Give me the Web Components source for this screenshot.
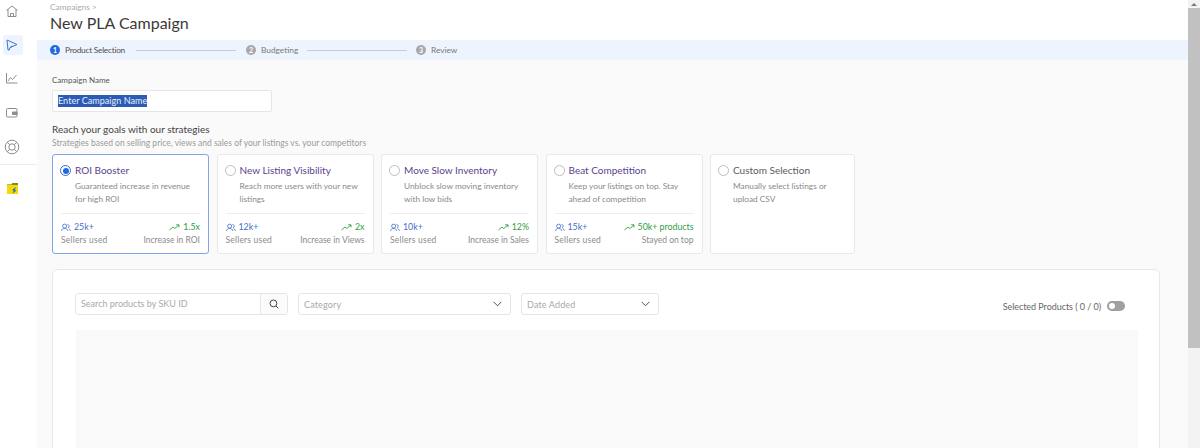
<!DOCTYPE html>
<html>
<head>
<meta charset="utf-8">
<title>New PLA Campaign</title>
<style>
  html, body { margin: 0; height: 448px; overflow: hidden; }
  body { font-family: "Lato", "Open Sans", sans-serif; color: #3d3d3d; background: #fafafa; }
  #app { display: flex; height: 448px; overflow: hidden; }
  #main { flex: 1; min-width: 0; display: flex; flex-direction: column; }
</style>
</head>
<body>
<div id="app">
  <side-nav></side-nav>
  <div id="main">
    <page-head crumb="Campaigns" title="New PLA Campaign"></page-head>
    <step-bar></step-bar>
    <campaign-form></campaign-form>
    <strategy-list>
      <strategy-card selected title="ROI Booster" text="Guaranteed increase in revenue for high ROI" users="25k+" gain="1.5x" gainlabel="Increase in ROI"></strategy-card>
      <strategy-card title="New Listing Visibility" text="Reach more users with your new listings" users="12k+" gain="2x" gainlabel="Increase in Views"></strategy-card>
      <strategy-card title="Move Slow Inventory" text="Unblock slow moving inventory with low bids" users="10k+" gain="12%" gainlabel="Increase in Sales"></strategy-card>
      <strategy-card title="Beat Competition" text="Keep your listings on top. Stay ahead of competition" users="15k+" gain="50k+ products" gainlabel="Stayed on top"></strategy-card>
      <strategy-card custom title="Custom Selection" text="Manually select listings or upload CSV"></strategy-card>
    </strategy-list>
    <product-panel></product-panel>
  </div>
  <page-scroll></page-scroll>
</div>

<script>
class SideNav extends HTMLElement {
    connectedCallback() {
        this.attachShadow({ mode: "open" });
        this.shadowRoot.innerHTML = `
        <style>
            :host { display: flex; flex-direction: column; align-items: center; width: 37px; flex: none; background: #fff; box-sizing: border-box; }
            .item { width: 20px; height: 20px; display: flex; align-items: center; justify-content: center; border-radius: 3px; margin-right: 11px; }
            .item.on { background: #eef4fd; }
            svg { display: block; fill: none; stroke: #8d8d8d; stroke-width: 1; margin-right: 2px; }
            .sep { width: 37px; height: 1px; background: #ececec; }
        </style>
        <div class="item" style="height:22px"><svg width="14" height="14" viewBox="0 0 14 14"><path d="M1.500 6.500 7 2l5.500 4.500M3 5.500V12.500h8V5.500M5.500 12.500V9.500h3v3"/></svg></div>
        <div class="item on" style="margin-top:13px"><svg width="14" height="14" viewBox="0 0 14 14" style="stroke:#3f74d6"><path d="M2 2l10 4.500-7 3-.8 2.500H3zM5 9.500 8 8"/></svg></div>
        <div class="item" style="margin-top:13px"><svg width="14" height="14" viewBox="0 0 14 14"><path d="M1.500 2v10h11M3 10l2.500-3.500 2 2L11.500 4"/></svg></div>
        <div class="item" style="margin-top:15px"><svg width="14" height="12" viewBox="0 0 14 12"><rect x="1.500" y="1.500" width="10.500" height="8.500" rx="1"/><path d="M7.500 5h4.500v2.500H7.500z" fill="#8d8d8d"/></svg></div>
        <div class="item" style="margin-top:14px;margin-bottom:7px"><svg width="16" height="16" viewBox="0 0 16 16"><circle cx="8" cy="8" r="6.800"/><circle cx="8" cy="8" r="3.200"/><path d="M3.200 3.200l2.500 2.500M12.800 3.200l-2.500 2.500M3.200 12.800l2.500-2.500M12.800 12.800l-2.500-2.500"/></svg></div>
        <div class="sep"></div>
        <div class="item" style="margin-top:13px"><svg width="11" height="11" viewBox="0 0 11 11" style="stroke:none"><path d="M0 1.500h4.500L5.500 0H11v11H0z" fill="#f5d90a"/><path d="M0 1.500h4.500L5.500 0H11v2H0z" fill="#6f8f2a"/><path d="M9 4 5 7l1.700.5L5.500 10.500 9.500 7.500 7.800 7z" fill="#2f6fb5"/></svg></div>`;
    }
}
customElements.define("side-nav", SideNav);

class PageHead extends HTMLElement {
    connectedCallback() {
        this.attachShadow({ mode: "open" });
        this.shadowRoot.innerHTML = `
        <style>
            :host { display: block; height: 40px; flex: none; background: #fff; box-sizing: border-box; padding: 2px 0 0 13px; }
            .crumb { font-size: 8.300px; line-height: 11px; color: #ababab; }
            h1 { margin: 0; font-size: 16px; line-height: 20px; font-weight: 400; color: #3a3a3a; }
        </style>
        <div class="crumb">${this.getAttribute("crumb")} &gt;</div>
        <h1>${this.getAttribute("title")}</h1>`;
    }
}
customElements.define("page-head", PageHead);

class StepBar extends HTMLElement {
    connectedCallback() {
        this.attachShadow({ mode: "open" });
        this.shadowRoot.innerHTML = `
        <style>
            :host { display: flex; align-items: center; height: 20px; flex: none; background: #eef4fd; padding-left: 13px; font-size: 8.300px; color: #7a7a7a; white-space: nowrap; }
            .num { width: 10px; height: 10px; border-radius: 50%; background: #a8a8ac; color: #fff; font-size: 7px; line-height: 10px; text-align: center; margin-right: 5px; font-weight: 700; }
            .num.on { background: #2368e0; }
            .on + span { color: #4f4f4f; letter-spacing: -.25px; }
            .line { height: 1px; background: #c6cdd8; width: 100px; margin: 0 10px; }
        </style>
        <div class="num on">1</div><span style="width:60px">Product Selection</span><div class="line" style="margin-left:11px"></div>
        <div class="num">2</div><span style="width:36px">Budgeting</span><div class="line"></div>
        <div class="num" style="margin-left:-1px">3</div><span>Review</span>`;
    }
}
customElements.define("step-bar", StepBar);

class CampaignForm extends HTMLElement {
    connectedCallback() {
        this.attachShadow({ mode: "open" });
        this.shadowRoot.innerHTML = `
        <style>
            :host { display: block; flex: none; padding: 14px 0 0 15px; }
            label { display: block; font-size: 8px; line-height: 12px; color: #555; }
            .box { width: 220px; height: 22px; box-sizing: border-box; margin-top: 4px; background: #fff; border: 1px solid #e6e6e6; border-radius: 2px; padding-left: 5px; display: flex; align-items: center; font-size: 9px; letter-spacing: .05px; }
            .sel { background: #2b5cb5; color: #e9eefb; line-height: 12px; }
            h2 { margin: 10px 0 0; font-size: 10px; line-height: 14px; font-weight: 400; color: #444; }
            p { margin: 1px 0 0; font-size: 8.500px; line-height: 12px; color: #9b9b9b; }
        </style>
        <label>Campaign Name</label>
        <div class="box"><span class="sel">Enter Campaign Name</span></div>
        <h2>Reach your goals with our strategies</h2>
        <p>Strategies based on selling price, views and sales of your listings vs. your competitors</p>`;
    }
}
customElements.define("campaign-form", CampaignForm);

class StrategyList extends HTMLElement {
    connectedCallback() {
        this.attachShadow({ mode: "open" });
        this.shadowRoot.innerHTML = `
        <style>
            :host { display: flex; flex: none; gap: 7.500px; padding: 5px 0 0 15px; }
        </style>
        <slot></slot>`;
    }
}
customElements.define("strategy-list", StrategyList);

class StrategyCard extends HTMLElement {
    connectedCallback() {
        const selected = this.hasAttribute("selected");
        const custom = this.hasAttribute("custom");
        const stats = custom ? "" : `
            <div class="stats">
                <div class="stat">
                    <div class="val blue"><svg width="10" height="9" viewBox="0 0 11 9"><circle cx="4" cy="3" r="2.200"/><path d="M.6 8.200c.3-1.800 1.600-2.700 3.400-2.700s3.100.9 3.400 2.700M7 1c1.300.2 2 1 2 2s-.6 1.700-1.400 2M8.500 5.800c1 .4 1.700 1.200 1.900 2.400"/></svg>${this.getAttribute("users")}</div>
                    <div class="lbl" style="letter-spacing:.2px">Sellers used</div>
                </div>
                <div class="stat right">
                    <div class="val green"><svg width="11" height="7" viewBox="0 0 11 7"><path d="M.5 6 4 3l1.800 1.500L10 1M7.200.8H10v2.500"/></svg>${this.getAttribute("gain")}</div>
                    <div class="lbl">${this.getAttribute("gainlabel")}</div>
                </div>
            </div>`;
        this.attachShadow({ mode: "open" });
        this.shadowRoot.innerHTML = `
        <style>
            :host { display: block; box-sizing: border-box; flex: none; width: ${custom ? 145 : 157}px; height: 100px; background: #fff; border: 1px solid ${selected ? "#7fa6e8" : "#e8e8e8"}; border-radius: 3px; padding: 9px 8px 0; }
            .top { display: flex; align-items: center; }
            .radio { width: 11px; height: 11px; box-sizing: border-box; border-radius: 50%; border: 1px solid ${selected ? "#2f6fe0" : "#bdbdbd"}; margin: 0 4px 0 -1px; flex: none; display: flex; align-items: center; justify-content: center; }
            .radio i { width: 6px; height: 6px; border-radius: 50%; background: #2368e0; }
            .name { font-size: 10px; line-height: 13px; color: ${custom ? "#5a5a5f" : "#5b3f8c"}; }
            .text { margin: 3px 0 0 14px; font-size: 8.300px; line-height: 13px; color: #8a8a8a; height: 26px; }
            .stats { display: flex; justify-content: space-between; border-top: 1px solid #eeeeee; margin-top: 7px; padding-top: 7px; }
            .val { display: flex; align-items: center; gap: 3px; font-size: 8.800px; line-height: 12px; }
            .val svg { fill: none; stroke-width: .9; stroke: currentColor; }
            .blue { color: #3f6fc9; }
            .green { color: #2f9e44; }
            .lbl { font-size: 8.500px; line-height: 14px; color: #8a8a8a; }
            .right { text-align: right; }
            .right .val { justify-content: flex-end; }
        </style>
        <div class="top"><div class="radio">${selected ? "<i></i>" : ""}</div><div class="name">${this.getAttribute("title")}</div></div>
        <div class="text">${this.getAttribute("text")}</div>
        ${stats}`;
    }
}
customElements.define("strategy-card", StrategyCard);

class FilterSelect extends HTMLElement {
    connectedCallback() {
        this.attachShadow({ mode: "open" });
        this.shadowRoot.innerHTML = `
        <style>
            :host { display: flex; align-items: center; justify-content: space-between; box-sizing: border-box; flex: none; height: 22px; border: 1px solid #e6e6e6; border-radius: 3px; padding: 0 8px 0 5px; font-size: 9px; color: #a9a9a9; letter-spacing: .15px; background: #fff; }
            svg { fill: none; stroke: #555; stroke-width: 1; }
        </style>
        <span><slot></slot></span>
        <svg width="9" height="6" viewBox="0 0 9 6"><path d="M.6.800 4.500 4.800 8.400.8"/></svg>`;
    }
}
customElements.define("filter-select", FilterSelect);

class ProductPanel extends HTMLElement {
    connectedCallback() {
        this.attachShadow({ mode: "open" });
        this.shadowRoot.innerHTML = `
        <style>
            :host { display: block; flex: none; box-sizing: border-box; width: 1108px; height: 240px; margin: 15px 0 0 15px; background: #fff; border: 1px solid #e8e8e8; border-radius: 6px; padding: 23px 21px 0 22px; }
            .bar { display: flex; align-items: center; height: 22px; }
            .search { display: flex; width: 213px; height: 22px; box-sizing: border-box; flex: none; border: 1px solid #e6e6e6; border-radius: 3px; margin-right: 10px; }
            .search span { flex: 1; padding-left: 5px; font-size: 9px; line-height: 20px; color: #a9a9a9; }
            .btn { width: 26px; border-left: 1px solid #e6e6e6; display: flex; align-items: center; justify-content: center; background: #fbfbfb; }
            .btn svg { fill: none; stroke: #444; stroke-width: 1; }
            .sel-count { margin-left: auto; display: flex; align-items: center; gap: 6px; font-size: 9px; color: #666; letter-spacing: -.05px; padding: 4px 13px 0 0; }
            .toggle { width: 18px; height: 10px; border-radius: 5px; background: #a0a0a0; display: flex; align-items: center; padding-left: 2px; box-sizing: border-box; }
            .toggle i { width: 6px; height: 6px; border-radius: 50%; background: #fff; }
            .table { margin: 15px 0 0 1px; height: 180px; background: #f9f9f9; }
        </style>
        <div class="bar">
            <div class="search"><span>Search products by SKU ID</span><div class="btn"><svg width="10" height="10" viewBox="0 0 10 10"><circle cx="4.400" cy="4.400" r="3.400"/><path d="M7 7l2.300 2.300"/></svg></div></div>
            <filter-select style="width:213px;margin-right:10px">Category</filter-select>
            <filter-select style="width:138px">Date Added</filter-select>
            <div class="sel-count">Selected Products ( 0 / 0)<div class="toggle"><i></i></div></div>
        </div>
        <div class="table"></div>`;
    }
}
customElements.define("product-panel", ProductPanel);

class PageScroll extends HTMLElement {
    connectedCallback() {
        this.attachShadow({ mode: "open" });
        this.shadowRoot.innerHTML = `
        <style>
            :host { display: flex; flex-direction: column; align-items: stretch; width: 12px; flex: none; background: #f3f3f3; }
            .arrow { height: 8px; display: flex; align-items: center; justify-content: center; }
            .arrow i { border: 3px solid transparent; border-bottom: 3px solid #7a7a7a; border-top: 0; }
            .thumb { height: 340px; background: #c1c1c1; }
        </style>
        <div class="arrow"><i></i></div>
        <div class="thumb"></div>`;
    }
}
customElements.define("page-scroll", PageScroll);
</script>
</body>
</html>
